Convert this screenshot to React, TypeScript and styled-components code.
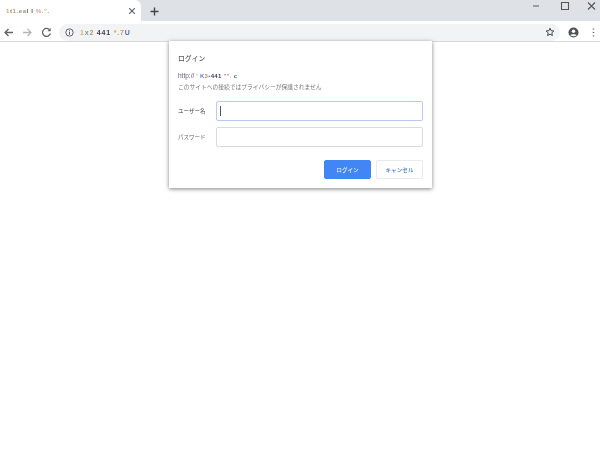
import React from "react";
import styled, { createGlobalStyle } from "styled-components";

const Global = createGlobalStyle`
  html, body { margin: 0; padding: 0; background: #fff; }
  body { font-family: "Noto Sans CJK JP", "Liberation Sans", sans-serif; overflow: hidden; }
`;
const Page = styled.div`
  position: relative;
  width: 600px;
  height: 456px;
  background: #fff;
  overflow: hidden;
  filter: blur(0.45px);
`;
const TabStrip = styled.div`
  height: 21px;
  background: #dee1e6;
  display: flex;
  align-items: flex-end;
`;
const Tab = styled.div`
  width: 141px;
  height: 21px;
  box-sizing: border-box;
  background: #fff;
  border-radius: 0 6px 0 0;
  display: flex;
  align-items: center;
  justify-content: space-between;
  padding: 1px 5px 0 6px;
`;
const Noise = styled.span<{ $size?: number; $gap?: number }>`
  font-family: "Liberation Sans", sans-serif;
  font-size: ${(p) => p.$size ?? 6}px;
  font-weight: 700;
  letter-spacing: ${(p) => p.$gap ?? 0.3}px;
  white-space: pre;
  line-height: 1;
  display: inline-block;
`;
const Bit = styled.span<{ $c: string }>`
  color: ${(p) => p.$c};
`;
const NewTab = styled.div`
  width: 27px;
  height: 21px;
  display: flex;
  align-items: center;
  justify-content: center;
  padding-top: 1px;
  box-sizing: border-box;
`;
const Spacer = styled.div`
  flex: 1;
`;
const WindowControls = styled.div`
  display: flex;
  align-self: flex-start;
  gap: 17px;
  padding: 0 4px 0 0;
  height: 11px;
  align-items: center;
`;
const Toolbar = styled.div`
  height: 21px;
  box-sizing: border-box;
  background: #fff;
  border-bottom: 1px solid #d6d8da;
  display: flex;
  align-items: center;
  padding: 2px 0 0 3px;
`;
const NavIcon = styled.svg`
  width: 11px;
  height: 11px;
  flex: none;
  margin-right: 8px;
`;
const Omnibox = styled.div`
  width: 501px;
  height: 17px;
  margin-left: -1px;
  margin-right: 8px;
  border-radius: 9px;
  background: #f1f3f4;
  display: flex;
  align-items: center;
  padding: 0 5px 0 6px;
  box-sizing: border-box;
  flex: none;
`;
const InfoIcon = styled.svg`
  flex: none;
  margin-right: 6px;
`;
const ProfileIcon = styled.svg`
  flex: none;
  margin-right: 13px;
`;
const MoreIcon = styled.svg`
  flex: none;
`;
const Dialog = styled.div`
  position: absolute;
  left: 169px;
  top: 41px;
  width: 263px;
  height: 147px;
  box-sizing: border-box;
  background: #fff;
  box-shadow: 0 1px 4px rgba(0, 0, 0, 0.5);
  padding: 12px 9px 0 9px;
  color: #5f6368;
`;
const Title = styled.div`
  font-size: 6.8px;
  font-weight: 500;
  line-height: 11px;
  color: #55595d;
  margin-bottom: 7px;
`;
const Origin = styled.div`
  font-family: "Liberation Sans", sans-serif;
  font-size: 6.5px;
  line-height: 9px;
  color: #6a5a7a;
  display: flex;
  align-items: center;
`;
const Warning = styled.div`
  font-size: 5.75px;
  line-height: 11px;
  color: #75787c;
  white-space: nowrap;
  margin-top: 1px;
  margin-bottom: 9px;
`;
const Row = styled.div`
  display: flex;
  align-items: center;
  height: 20px;
  margin-bottom: 6px;
`;
const Label = styled.div<{ $strong?: boolean }>`
  width: 38px;
  font-size: 5.5px;
  color: ${(p) => (p.$strong ? "#444" : "#666")};
  white-space: nowrap;
`;
const Field = styled.div<{ $focus?: boolean }>`
  width: 208px;
  height: 20px;
  box-sizing: border-box;
  border-radius: 2px;
  border: ${(p) => (p.$focus ? "1.5px solid #b4cbf3" : "1px solid #d9dbde")};
  display: flex;
  align-items: center;
  padding-left: 3px;
`;
const Caret = styled.div`
  width: 1px;
  height: 10px;
  background: #555;
`;
const Actions = styled.div`
  display: flex;
  justify-content: flex-end;
  gap: 5px;
  margin-top: 13px;
`;
const Btn = styled.div<{ $primary?: boolean }>`
  width: 47px;
  height: 19px;
  border-radius: 2px;
  box-sizing: border-box;
  display: flex;
  align-items: center;
  justify-content: center;
  font-size: 5.6px;
  font-weight: 500;
  background: ${(p) => (p.$primary ? "#4285f4" : "#fff")};
  color: ${(p) => (p.$primary ? "#e8f0fe" : "#4a78cc")};
  border: 1px solid ${(p) => (p.$primary ? "#4285f4" : "#e8eaed")};
`;

const stroke = { fill: "none", stroke: "#5f6368", strokeWidth: 1.3 };

export default function App() {
  return (
    <Page>
      <Global />
      <TabStrip>
        <Tab>
          <Noise $size={6} $gap={0.6}>
            <Bit $c="#e0a050">1</Bit>
            <Bit $c="#7a8a9a">t</Bit>
            <Bit $c="#d09060">1</Bit>
            <Bit $c="#888">.</Bit>
            <Bit $c="#a08a70">ea</Bit>
            <Bit $c="#666">l </Bit>
            <Bit $c="#4a4a8a">l </Bit>
            <Bit $c="#e0a090">%</Bit>
            <Bit $c="#7a9ac0">.</Bit>
            <Bit $c="#e0b070">"</Bit>
            <Bit $c="#6a90c0">.</Bit>
          </Noise>
          <svg width="8" height="8" viewBox="0 0 8 8">
            <path d="M1.2 1.2 6.8 6.8M6.8 1.2 1.2 6.8" {...stroke} strokeWidth={1.2} />
          </svg>
        </Tab>
        <NewTab>
          <svg width="9" height="9" viewBox="0 0 9 9">
            <path d="M4.5 0.5v8M.5 4.5h8" fill="none" stroke="#44474a" strokeWidth="1.4" />
          </svg>
        </NewTab>
        <Spacer />
        <WindowControls>
          <svg width="14" height="10" viewBox="0 0 14 10">
            <path d="M4 5h6" fill="none" stroke="#666" strokeWidth="1.1" />
          </svg>
          <svg width="10" height="10" viewBox="0 0 10 10">
            <path d="M1.5 1.5h7v7h-7z" fill="none" stroke="#555" strokeWidth="1.1" />
          </svg>
          <svg width="9" height="10" viewBox="0 0 9 10">
            <path d="M1 1.5 8 8.5M8 1.5 1 8.5" fill="none" stroke="#555" strokeWidth="1.1" />
          </svg>
        </WindowControls>
      </TabStrip>
      <Toolbar>
        <NavIcon viewBox="0 0 11 11">
          <path d="M10 5.5H2M5.5 2 2 5.5 5.5 9" {...stroke} />
        </NavIcon>
        <NavIcon viewBox="0 0 11 11">
          <path d="M1 5.5h8M5.5 2 9 5.5 5.5 9" {...stroke} stroke="#b4b7ba" />
        </NavIcon>
        <NavIcon viewBox="0 0 11 11">
          <path d="M9 3.4A4 4 0 1 0 9.4 6.5" {...stroke} />
          <path d="M9.6 1v3.2H6.4z" fill="#5f6368" />
        </NavIcon>
        <Omnibox>
          <InfoIcon width="9" height="9" viewBox="0 0 9 9">
            <circle cx="4.5" cy="4.5" r="3.7" fill="none" stroke="#5f6368" strokeWidth="1" />
            <path d="M4.5 3.9v2.8M4.5 2.2v1" stroke="#5f6368" strokeWidth="1" />
          </InfoIcon>
          <Noise $size={7} $gap={0.8}>
            <Bit $c="#e0b060">1</Bit>
            <Bit $c="#6a9ac0">x</Bit>
            <Bit $c="#c09060">2 </Bit>
            <Bit $c="#503a40">44</Bit>
            <Bit $c="#3a3a5a">1 </Bit>
            <Bit $c="#e0a060">*</Bit>
            <Bit $c="#7aa0c8">.</Bit>
            <Bit $c="#d09a50">7</Bit>
            <Bit $c="#4a70b0">U</Bit>
          </Noise>
          <Spacer />
          <svg width="10" height="10" viewBox="0 0 10 10">
            <path
              d="M5 1.2 6.1 3.7 8.9 4 6.8 5.8 7.4 8.6 5 7.1 2.6 8.6 3.2 5.8 1.1 4 3.9 3.7Z"
              fill="none"
              stroke="#44474a"
              strokeWidth="1"
            />
          </svg>
        </Omnibox>
        <ProfileIcon width="11" height="11" viewBox="0 0 11 11">
          <circle cx="5.5" cy="5.5" r="5" fill="#4f5357" />
          <circle cx="5.5" cy="4.2" r="1.7" fill="#fff" />
          <path d="M2.4 8.2c.8-1.4 5.4-1.4 6.2 0-1.6 1.4-4.6 1.4-6.2 0Z" fill="#fff" />
        </ProfileIcon>
        <MoreIcon width="3" height="11" viewBox="0 0 3 11">
          <path d="M1.5 1.5v1M1.5 5v1M1.5 8.5v1" stroke="#5f6368" strokeWidth="1.6" />
        </MoreIcon>
      </Toolbar>
      <Dialog>
        <Title>ログイン</Title>
        <Origin>
          http://
          <Noise $size={6}>
            <Bit $c="#999"> '</Bit>
            <Bit $c="#5a8ac0"> K</Bit>
            <Bit $c="#c09060">3</Bit>
            <Bit $c="#5a90c0">•</Bit>
            <Bit $c="#403a50">44</Bit>
            <Bit $c="#3a3a7a">1 </Bit>
            <Bit $c="#d08a7a">"</Bit>
            <Bit $c="#7a9ac0">"</Bit>
            <Bit $c="#e0b070">.</Bit>
            <Bit $c="#3a6ab0"> c</Bit>
          </Noise>
        </Origin>
        <Warning>このサイトへの接続ではプライバシーが保護されません</Warning>
        <Row>
          <Label $strong>ユーザー名</Label>
          <Field $focus>
            <Caret />
          </Field>
        </Row>
        <Row>
          <Label>パスワード</Label>
          <Field />
        </Row>
        <Actions>
          <Btn $primary>ログイン</Btn>
          <Btn>キャンセル</Btn>
        </Actions>
      </Dialog>
    </Page>
  );
}
